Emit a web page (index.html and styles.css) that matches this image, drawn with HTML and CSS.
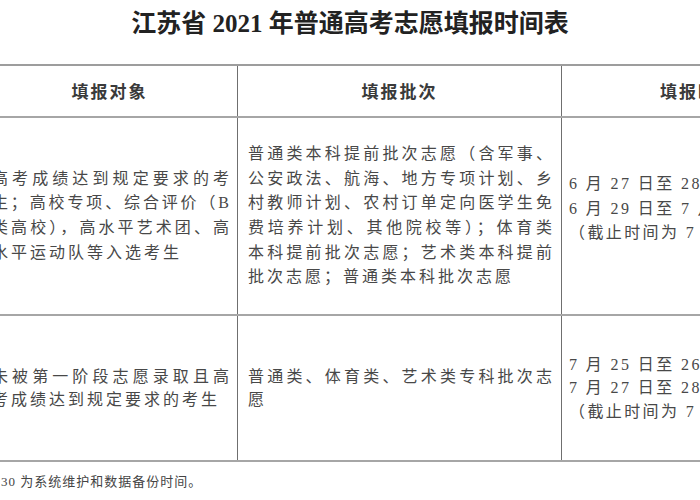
FILE: index.html
```html
<!DOCTYPE html>
<html lang="zh-CN">
<head>
<meta charset="utf-8">
<title>江苏省 2021 年普通高考志愿填报时间表</title>
<link rel="stylesheet" href="styles.css">
</head>
<body>
<div class="page">
  <h1 class="title">江苏省 2021 年普通高考志愿填报时间表</h1>
  <div class="table">
    <div class="row head">
      <div class="cell c1">填报对象</div>
      <div class="cell c2">填报批次</div>
      <div class="cell c3">填报时间</div>
    </div>
    <div class="row r1">
      <div class="cell c1">
        <div class="ln j">高考成绩达到规定要求的考</div>
        <div class="ln j">生；高校专项、综合评价（B</div>
        <div class="ln j">类高校），高水平艺术团、高</div>
        <div class="ln">水平运动队等入选考生</div>
      </div>
      <div class="cell c2">
        <div class="ln j">普通类本科提前批次志愿（含军事、</div>
        <div class="ln j">公安政法、航海、地方专项计划、乡</div>
        <div class="ln j">村教师计划、农村订单定向医学生免</div>
        <div class="ln j">费培养计划、其他院校等）；体育类</div>
        <div class="ln j">本科提前批次志愿；艺术类本科提前</div>
        <div class="ln">批次志愿；普通类本科批次志愿</div>
      </div>
      <div class="cell c3 up">
        <div class="ln">6 月 27 日至 28 日模拟填报；</div>
        <div class="ln">6 月 29 日至 7 月 2 日正式填报</div>
        <div class="ln">（截止时间为 7 月 2 日 17:00）</div>
      </div>
    </div>
    <div class="row r2">
      <div class="cell c1">
        <div class="ln j">未被第一阶段志愿录取且高</div>
        <div class="ln">考成绩达到规定要求的考生</div>
      </div>
      <div class="cell c2">
        <div class="ln j">普通类、体育类、艺术类专科批次志</div>
        <div class="ln">愿</div>
      </div>
      <div class="cell c3">
        <div class="ln">7 月 25 日至 26 日模拟填报；</div>
        <div class="ln">7 月 27 日至 28 日正式填报</div>
        <div class="ln">（截止时间为 7 月 28 日 17:00）</div>
      </div>
    </div>
  </div>
  <p class="note">30 为系统维护和数据备份时间。</p>
</div>
</body>
</html>
```
FILE: styles.css
```css
html, body {
  margin: 0;
  padding: 0;
  background: #fff;
}

.page {
  width: 700px;
  height: 500px;
  overflow: hidden;
  background: #fff;
  font-family: "Liberation Serif", "Noto Sans CJK SC", serif;
}

.title {
  margin: 0;
  padding-top: 9px;
  font-size: 25px;
  line-height: 30px;
  font-weight: 700;
  text-align: center;
  color: #222;
  font-family: "Liberation Serif", "Noto Sans CJK SC", serif;
}

.table {
  margin-top: 25px;
  margin-left: -18px;
  width: 852px;
  border-top: 2px solid #9d9d9d;
}

.row {
  display: grid;
  grid-template-columns: 256px 324px 272px;
  border-bottom: 2px solid #a6a6a6;
}

.head { height: 50px; }
.r1 { height: 196px; }
.r2 { height: 144px; }

.cell {
  display: flex;
  flex-direction: column;
  justify-content: center;
  box-sizing: border-box;
  border-right: 1px solid #6f6f6f;
  color: #484848;
  font-size: 16px;
  letter-spacing: 3px;
  line-height: 24.6px;
}

.cell.c3 {
  border-right: none;
  white-space: nowrap;
  letter-spacing: 2.4px;
}

.head .cell {
  align-items: center;
  font-family: "Noto Sans CJK SC", sans-serif;
  font-weight: 700;
  font-size: 17px;
  letter-spacing: 2px;
  color: #3a3a3a;
}

.r1 .c1, .r2 .c1 { padding: 0 8px 0 10px; }
.r1 .c2, .r2 .c2 { padding: 0 9px 0 10px; }
.r1 .c3, .r2 .c3 { padding: 0 0 0 7px; }
.r2 .cell { line-height: 23.5px; }

.c3.up { padding-bottom: 14px; }

.ln.j {
  text-align: justify;
  text-align-last: justify;
  letter-spacing: 0;
}

.note {
  margin: 11px 0 0 1px;
  font-size: 13px;
  line-height: 18px;
  letter-spacing: 1px;
  color: #444;
}
```
